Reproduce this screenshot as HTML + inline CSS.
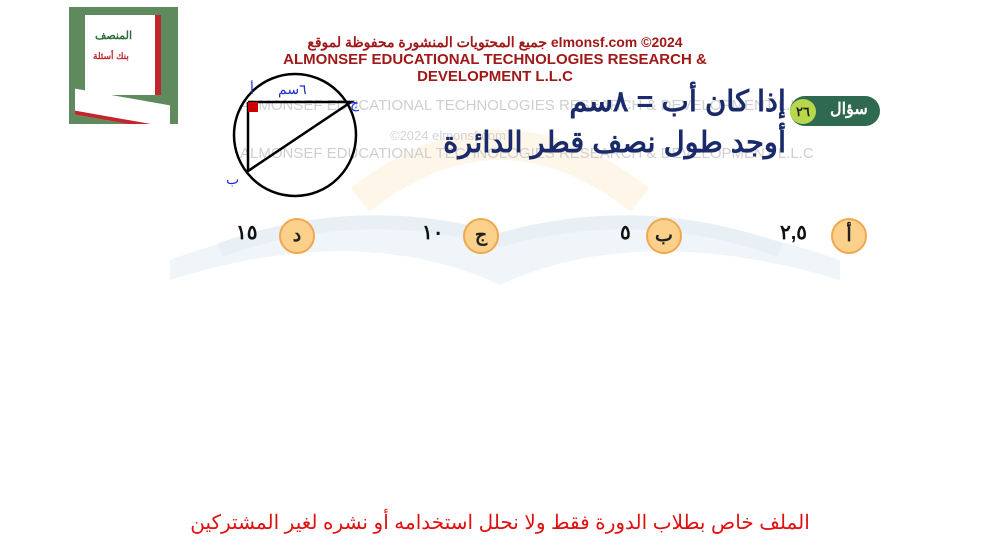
<!DOCTYPE html>
<html><head><meta charset="utf-8"><style>
body{margin:0;width:994px;height:556px;background:#fff;position:relative;overflow:hidden;font-family:"Liberation Sans","Noto Sans CJK SC",sans-serif}
.a{position:absolute;white-space:nowrap}
.red{color:#a01818;font-weight:bold;text-align:center}
.opt{position:absolute;top:218px;width:36px;height:36px;border-radius:50%;background:#fbd08a;border:2px solid #f0a850;box-sizing:border-box;text-align:center;font-weight:bold;font-size:19px;line-height:31px;color:#222}
.num{position:absolute;top:220px;font-weight:bold;font-size:20px;color:#111;direction:rtl;white-space:nowrap}
</style></head><body>
<svg class="a" style="left:160px;top:90px" width="700" height="220">
<path d="M10 170 Q200 100 340 150 Q480 100 680 170 L680 190 Q480 130 340 195 Q200 130 10 190Z" fill="#f0f5f9"/>
<path d="M60 160 Q200 110 340 150 Q480 110 620 160" fill="none" stroke="#e8f0f5" stroke-width="14"/>
<path d="M200 110 Q340 0 480 110" fill="none" stroke="#fef6e8" stroke-width="30"/>
<text x="320" y="0" font-size="13" fill="#d4d4d4" font-family="Liberation Sans">©2024 elmonsf.com</text>
<text x="80" y="20" font-size="15" fill="#cfcfcf" font-family="Liberation Sans">ALMONSEF EDUCATIONAL TECHNOLOGIES RESEARCH &amp; DEVELOPMENT L.L.C</text>
<text x="230" y="50" font-size="13" fill="#d4d4d4" font-family="Liberation Sans">©2024 elmonsf.com</text>
<text x="80" y="68" font-size="15" fill="#cfcfcf" font-family="Liberation Sans">ALMONSEF EDUCATIONAL TECHNOLOGIES RESEARCH &amp; DEVELOPMENT L.L.C</text>
</svg>
<div class="a" style="left:69px;top:7px;width:109px;height:117px;background:#5e8a5e;overflow:hidden">
 <div class="a" style="left:16px;top:8px;width:70px;height:80px;background:#fff;border-right:6px solid #c0262b"></div>
 <div class="a" style="left:26px;top:22px;font-size:11px;font-weight:bold;color:#2b6e3a">المنصف</div>
 <div class="a" style="left:24px;top:44px;font-size:9px;font-weight:bold;color:#c0262b">بنك أسئلة</div>
 <div class="a" style="left:6px;top:90px;width:95px;height:22px;background:#fff;border-bottom:4px solid #c0262b;transform:skewY(10deg)"></div>
</div>
<div class="a red" style="left:280px;top:34px;width:430px;font-size:14px">جميع المحتويات المنشورة محفوظة لموقع elmonsf.com ©2024</div>
<div class="a red" style="left:280px;top:51px;width:430px;font-size:15px">ALMONSEF EDUCATIONAL TECHNOLOGIES RESEARCH &amp;</div>
<div class="a red" style="left:280px;top:68px;width:430px;font-size:15px">DEVELOPMENT L.L.C</div>
<svg class="a" style="left:220px;top:70px" width="150" height="135">
<circle cx="75" cy="65" r="61" fill="none" stroke="#000" stroke-width="2.5"/>
<polyline points="28,32 131,32 28,101 28,32" fill="none" stroke="#000" stroke-width="2.5"/>
<rect x="28" y="32" width="10" height="10" fill="#c00"/>
<text x="30" y="24" fill="#1a2fd0" font-size="14">أ</text>
<text x="58" y="24" fill="#1a2fd0" font-size="14">٦سم</text>
<text x="130" y="38" fill="#1a2fd0" font-size="14">ج</text>
<text x="6" y="114" fill="#1a2fd0" font-size="14">ب</text>
</svg>
<div class="a" style="left:790px;top:96px;width:90px;height:30px;background:#2f6a50;border-radius:15px"></div>
<div class="a" style="left:830px;top:99px;color:#fff;font-weight:bold;font-size:16px">سؤال</div>
<div class="a" style="left:790px;top:99px;width:26px;height:25px;border-radius:50%;background:#b7d84a;font-size:13px;font-weight:bold;text-align:center;line-height:25px;color:#222">٢٦</div>
<div class="a" style="left:500px;top:84px;width:286px;text-align:right;direction:rtl;font-size:29px;font-weight:bold;color:#1a2a6a">إذا كان أب = ٨سم</div>
<div class="a" style="left:400px;top:125px;width:386px;text-align:right;direction:rtl;font-size:29px;font-weight:bold;color:#1a2a6a">أوجد طول نصف قطر الدائرة</div>
<div class="opt" style="left:831px">أ</div><div class="num" style="left:780px">٢,٥</div>
<div class="opt" style="left:646px">ب</div><div class="num" style="left:620px">٥</div>
<div class="opt" style="left:463px">ج</div><div class="num" style="left:422px">١٠</div>
<div class="opt" style="left:279px">د</div><div class="num" style="left:236px">١٥</div>
<div class="a" style="left:150px;top:510px;width:700px;text-align:center;color:#e01010;font-size:20px;direction:rtl">الملف خاص بطلاب الدورة فقط ولا نحلل استخدامه أو نشره لغير المشتركين</div>
</body></html>
